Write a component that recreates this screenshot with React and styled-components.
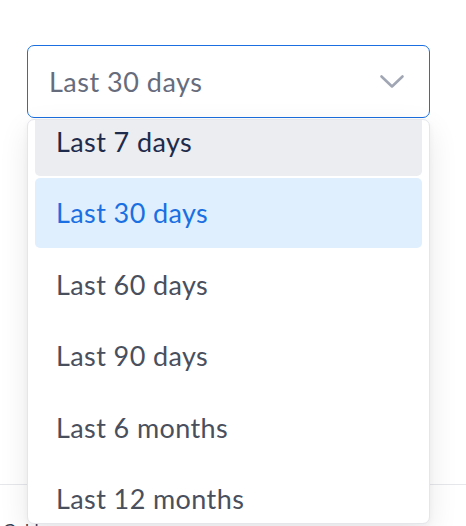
import React, { useLayoutEffect, useRef } from "react";
import styled, { createGlobalStyle } from "styled-components";

const GlobalStyle = createGlobalStyle`
  html, body { margin: 0; padding: 0; background: #ffffff; }
  body { font-family: Lato, "Open Sans", Arial, sans-serif; }
`;

const Page = styled.div`
  position: relative;
  width: 466px;
  height: 526px;
  overflow: hidden;
  padding-top: 45px;
  box-sizing: border-box;
  background: #ffffff;
`;

const SelectWrap = styled.div`
  position: relative;
  margin: 0 36px 0 27px;
  z-index: 2;
`;

const Trigger = styled.button`
  width: 100%;
  height: 73px;
  box-sizing: border-box;
  display: flex;
  align-items: center;
  justify-content: space-between;
  padding: 0 24px 0 21px;
  border: 1px solid #1c6fe0;
  border-radius: 7px;
  background: #ffffff;
  font-family: inherit;
  font-size: 27px;
  letter-spacing: 0.5px;
  color: #676c7c;
  cursor: pointer;
`;

const Menu = styled.div`
  position: absolute;
  top: calc(100% + 1px);
  left: 0;
  right: 0;
  height: 405px;
  box-sizing: border-box;
  border: 1px solid #e4e6ea;
  border-radius: 7px;
  background: #ffffff;
  box-shadow: 0 10px 30px rgba(17, 24, 39, 0.09), 0 2px 6px rgba(17, 24, 39, 0.04);
  overflow: hidden;
`;

const List = styled.ul`
  list-style: none;
  margin: 0;
  height: 100%;
  box-sizing: border-box;
  padding: 7px;
  display: flex;
  flex-direction: column;
  gap: 1.5px;
  overflow: hidden;
`;

const Item = styled.li`
  flex: 0 0 auto;
  height: 70px;
  display: flex;
  align-items: center;
  padding: 0 20px 0 21px;
  border-radius: 5px;
  font-size: 27px;
  letter-spacing: 0.4px;
  background: ${(p) => (p.$selected ? "#e0effe" : p.$hover ? "#ecedf0" : "transparent")};
  color: ${(p) => (p.$selected ? "#1a6fe2" : p.$hover ? "#1e2b4c" : "#4a4f5d")};
`;

const Backdrop = styled.div`
  margin-top: 366px;
`;

const Rule = styled.div`
  height: 1px;
  background: #e6e7eb;
`;

const FootLabel = styled.div`
  padding: 36px 0 0 3px;
  font-size: 17px;
  line-height: 20px;
  color: #374151;
`;

const Chevron = () => (
  <svg width="26" height="16" viewBox="0 0 26 16" fill="none">
    <polyline
      points="2.5,2.5 13,12.5 23.5,2.5"
      stroke="#a0a6b3"
      strokeWidth="2.6"
      strokeLinecap="round"
      strokeLinejoin="round"
    />
  </svg>
);

const options = [
  "Last 7 days",
  "Last 30 days",
  "Last 60 days",
  "Last 90 days",
  "Last 6 months",
  "Last 12 months",
];

export default function App() {
  const listRef = useRef(null);
  useLayoutEffect(() => {
    if (listRef.current) listRef.current.scrollTop = 21;
  }, []);
  return (
    <Page>
      <GlobalStyle />
      <SelectWrap>
        <Trigger type="button">
          <span>Last 30 days</span>
          <Chevron />
        </Trigger>
        <Menu>
          <List ref={listRef}>
            {options.map((o, i) => (
              <Item key={o} $hover={i === 0} $selected={o === "Last 30 days"}>
                {o}
              </Item>
            ))}
          </List>
        </Menu>
      </SelectWrap>
      <Backdrop>
        <Rule />
        <FootLabel>Gold</FootLabel>
      </Backdrop>
    </Page>
  );
}
